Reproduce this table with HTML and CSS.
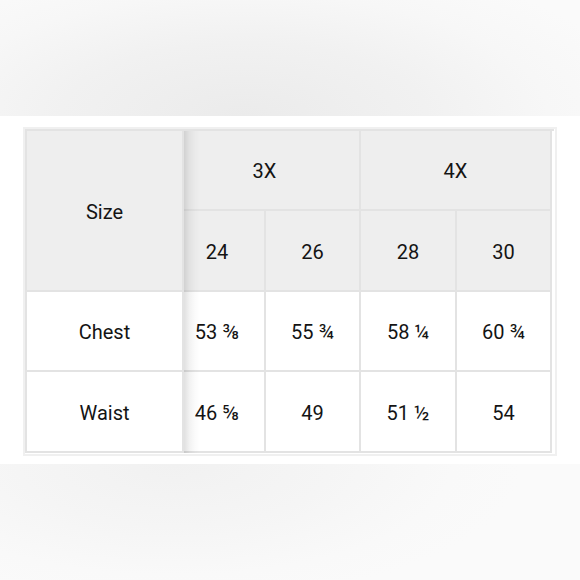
FILE: index.html
```html
<!DOCTYPE html>
<html>
<head>
<meta charset="utf-8">
<link rel="stylesheet" href="styles.css">
</head>
<body>
<div class="band band-top"></div>
<div class="sheet">
  <div class="frame">
    <div class="grid">
      <div class="fixed">
        <div class="cell head size">Size</div>
        <div class="cell r3">Chest</div>
        <div class="cell r4">Waist</div>
      </div>
      <div class="viewport">
        <div class="scroller">
          <div class="cell head r1 span2">3X</div>
          <div class="cell head r1 span2">4X</div>
          <div class="cell head r2 c96">24</div>
          <div class="cell head r2 c95">26</div>
          <div class="cell head r2 c96">28</div>
          <div class="cell head r2 c95">30</div>
          <div class="cell r3 c96">53 ⅜</div>
          <div class="cell r3 c95">55 ¾</div>
          <div class="cell r3 c96">58 ¼</div>
          <div class="cell r3 c95">60 ¾</div>
          <div class="cell r4 c96">46 ⅝</div>
          <div class="cell r4 c95">49</div>
          <div class="cell r4 c96">51 ½</div>
          <div class="cell r4 c95">54</div>
        </div>
        <div class="shadow"></div>
      </div>
    </div>
  </div>
</div>
<div class="band band-bottom"></div>
</body>
</html>
```

FILE: styles.css
```css
html, body {
  margin: 0;
  padding: 0;
  background: #ffffff;
  font-family: Roboto, "Noto Sans", "Liberation Sans", sans-serif;
  color: #141414;
}

body {
  width: 580px;
  height: 580px;
  overflow: hidden;
  display: flex;
  flex-direction: column;
}

.band-top {
  height: 116px;
  flex: none;
  background:
    radial-gradient(ellipse 70% 140% at 42% 100%, #ebebeb 0%, #f1f1f1 45%, #f7f7f7 75%, #fafafa 100%);
}

.sheet {
  flex: none;
  background: #fff;
  padding: 11px 0 8px 23px;
}

.frame {
  width: 529px;
  border: 2px solid #f0f0f0;
  padding: 0 1px 1px 0;
  background: #fff;
}

.grid {
  display: flex;
  border-top: 2px solid #e3e3e3;
  border-left: 2px solid #e3e3e3;
}

.cell {
  box-sizing: border-box;
  display: flex;
  align-items: center;
  justify-content: center;
  padding-top: 2px;
  border-right: 2px solid #e3e3e3;
  border-bottom: 2px solid #e3e3e3;
  font-size: 20px;
  background: #fff;
  white-space: nowrap;
}

.head {
  background: #eeeeee;
}

.fixed {
  display: flex;
  flex-direction: column;
  width: 157px;
  flex: none;
}

.size { height: 161px; }
.r1, .r3 { height: 80px; }
.r2, .r4 { height: 81px; }

.viewport {
  position: relative;
  width: 368px;
  overflow: hidden;
  flex: none;
}

.scroller {
  display: flex;
  flex-wrap: wrap;
  width: 382px;
  margin-left: -14px;
}

.span2 { width: 191px; }
.c96 { width: 96px; }
.c95 { width: 95px; }

.shadow {
  position: absolute;
  left: 0;
  top: 0;
  bottom: 0;
  width: 16px;
  background: linear-gradient(to right, rgba(0,0,0,0.12), rgba(0,0,0,0.05) 35%, rgba(0,0,0,0.015) 70%, rgba(0,0,0,0));
  pointer-events: none;
}

.band-bottom {
  flex: 1;
  background:
    radial-gradient(ellipse 60% 120% at 30% 0%, #f1f1f1 0%, #f5f5f5 45%, #f9f9f9 80%, #fafafa 100%);
}
```
